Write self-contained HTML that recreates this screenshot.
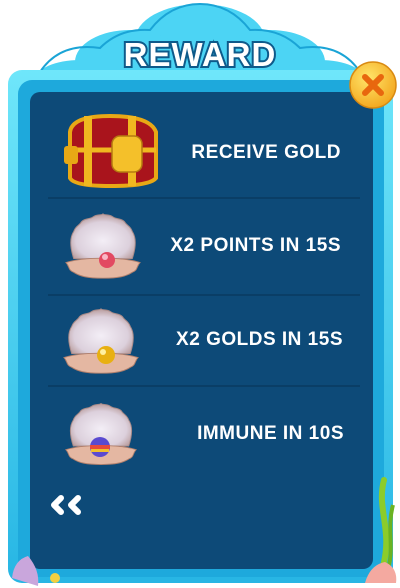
<!DOCTYPE html>
<html><head><style>
html,body{margin:0;padding:0;background:#fff;width:400px;height:588px;overflow:hidden}
svg{display:block}
.t{font-family:"Liberation Sans",sans-serif;font-weight:bold;fill:#fff;font-size:19px;text-anchor:end;letter-spacing:0.5px}
</style></head><body>
<svg width="400" height="588" viewBox="0 0 400 588">
<defs>
<linearGradient id="fr" x1="0" y1="0" x2="0" y2="1"><stop offset="0" stop-color="#6fe6fa"/><stop offset="1" stop-color="#27b6e4"/></linearGradient>
<radialGradient id="cb" cx="0.4" cy="0.35" r="0.7"><stop offset="0" stop-color="#ffe56a"/><stop offset="1" stop-color="#f3a51c"/></radialGradient>
<radialGradient id="sh" cx="0.5" cy="0.6" r="0.6"><stop offset="0" stop-color="#f3eef6"/><stop offset="0.7" stop-color="#dcd0dc"/><stop offset="1" stop-color="#b79a9a"/></radialGradient>
<symbol id="shell" viewBox="0 0 80 70">
<path d="M10 48 C6 36 6 26 10 20 C12 14 16 14 18 10 C22 6 26 8 30 5 C34 2 38 4 40 2 C42 4 46 2 50 5 C54 8 58 6 62 10 C64 14 68 14 70 20 C74 26 74 36 70 48 Z" fill="url(#sh)" stroke="#a88a88" stroke-width="1"/>
<path d="M2 52 C20 46 60 46 78 52 C74 56 76 60 70 62 C64 66 56 68 40 68 C24 68 16 66 10 62 C4 60 6 56 2 52 Z" fill="#e4b7a2" stroke="#b07f6c" stroke-width="1"/>
</symbol>
</defs>
<!-- cloud -->
<g fill="#4cd4f4">
<ellipse cx="200" cy="40" rx="65" ry="36"/>
<ellipse cx="130" cy="62" rx="55" ry="32"/>
<ellipse cx="270" cy="62" rx="55" ry="32"/>
<ellipse cx="80" cy="80" rx="45" ry="20"/>
<ellipse cx="320" cy="80" rx="45" ry="20"/>
</g>
<g fill="none" stroke="#1aa4d6" stroke-width="2">
<path d="M40 72 Q60 42 100 48 Q120 28 150 30 Q170 4 200 4 Q230 4 250 30 Q280 28 300 48 Q340 42 360 72"/>
</g>
<!-- frame -->
<rect x="8" y="70" width="385" height="513" rx="14" fill="url(#fr)"/>
<rect x="18" y="80" width="366" height="497" rx="14" fill="#1ea9dc"/>
<rect x="30" y="92" width="343" height="477" rx="10" fill="#0d4a78"/>
<line x1="48" y1="198" x2="360" y2="198" stroke="#093a60" stroke-width="1.5"/>
<line x1="48" y1="295" x2="360" y2="295" stroke="#093a60" stroke-width="1.5"/>
<line x1="48" y1="386" x2="360" y2="386" stroke="#093a60" stroke-width="1.5"/>
<!-- title -->
<text x="200" y="66" text-anchor="middle" font-family="Liberation Sans,sans-serif" font-weight="bold" font-size="33" fill="#fff" stroke="#0e5a8a" stroke-width="4" paint-order="stroke" letter-spacing="1">REWARD</text>
<!-- close -->
<circle cx="373" cy="85" r="23" fill="url(#cb)" stroke="#d98a12" stroke-width="1.5"/>
<path d="M365 77 L381 93 M381 77 L365 93" stroke="#e8670e" stroke-width="6" stroke-linecap="round"/>
<!-- chest -->
<path d="M70 132 Q72 116 110 116 Q150 116 156 132 L156 178 Q150 186 110 186 Q74 186 70 178 Z" fill="#a9141c" stroke="#e8a815" stroke-width="4"/>
<path d="M70 150 L156 150" stroke="#f0b820" stroke-width="5"/>
<path d="M88 116 L88 186 M132 116 L132 186" stroke="#f0b820" stroke-width="8"/>
<rect x="112" y="136" width="30" height="36" rx="8" fill="#f4c02a" stroke="#b57a10" stroke-width="1.5"/>
<rect x="64" y="146" width="14" height="18" rx="3" fill="#e8a815"/>
<!-- shells -->
<use href="#shell" x="64" y="211" width="78" height="70"/>
<circle cx="107" cy="260" r="8" fill="#e24a62"/><circle cx="105" cy="257" r="3" fill="#f9b8c6"/>
<use href="#shell" x="62" y="305" width="78" height="72"/>
<circle cx="106" cy="355" r="9" fill="#e8b012"/><circle cx="103" cy="352" r="3" fill="#fff0a0"/>
<use href="#shell" x="64" y="400" width="74" height="68"/>
<circle cx="100" cy="447" r="10" fill="#5a4ad0"/><rect x="90" y="445" width="20" height="4" fill="#e84a3a"/><rect x="91" y="449" width="18" height="3" fill="#f0c030"/>
<!-- texts -->
<text class="t" x="341" y="158">RECEIVE GOLD</text>
<text class="t" x="341" y="251">X2 POINTS IN 15S</text>
<text class="t" x="343" y="345">X2 GOLDS IN 15S</text>
<text class="t" x="344" y="439">IMMUNE IN 10S</text>
<!-- back -->
<path d="M61 498 L54 505 L61 512 M78 498 L71 505 L78 512" stroke="#fff" stroke-width="6" stroke-linecap="round" stroke-linejoin="round" fill="none"/>
<!-- decor -->
<path d="M384 480 C376 510 394 530 382 570" stroke="#8ccc2a" stroke-width="6" fill="none" stroke-linecap="round"/>
<path d="M393 505 C386 530 396 550 386 575" stroke="#6bb322" stroke-width="4" fill="none"/>
<path d="M365 583 Q370 565 385 562 Q398 568 396 583 Z" fill="#f4a9a0"/>
<path d="M12 578 Q14 560 28 556 Q40 570 38 586 Z" fill="#c9a6dc"/>
<circle cx="55" cy="578" r="5" fill="#f3d040"/>
</svg>
</body></html>
